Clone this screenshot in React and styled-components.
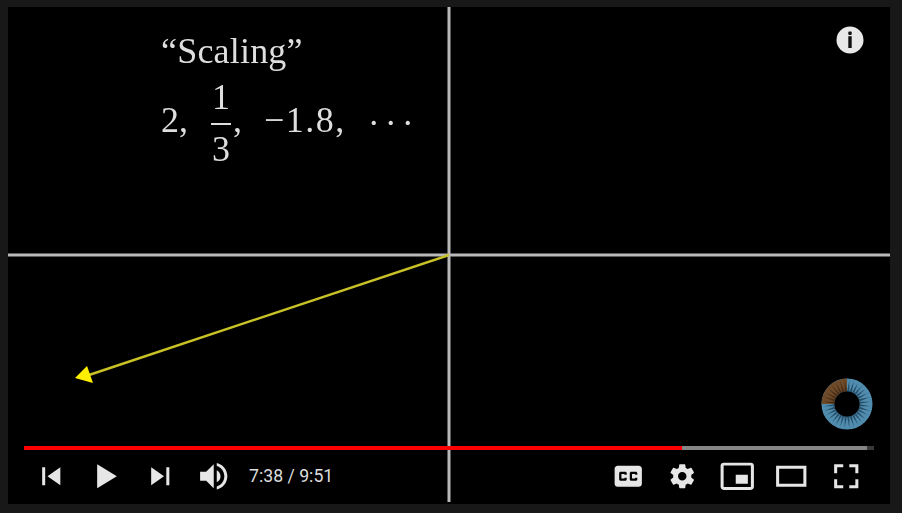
import React from 'react';
import styled, { createGlobalStyle } from 'styled-components';

const GlobalStyle = createGlobalStyle`
    html, body {
        margin: 0;
        padding: 0;
        height: 100%;
        background: #181818;
    }
`;

const Page = styled.div`
    width: 902px;
    height: 513px;
    padding: 7px 12px 9px 8px;
    box-sizing: border-box;
    background: #181818;
`;
const Player = styled.div`
    position: relative;
    width: 882px;
    height: 497px;
    background: #000;
    display: flex;
    flex-direction: column;
    justify-content: flex-end;
    overflow: hidden;
`;
const Scene = styled.svg`
    position: absolute;
    top: 0;
    left: 0;
`;
const MathText = styled.div`
    position: absolute;
    top: 22px;
    left: 153px;
    color: #dedede;
    font-family: "Liberation Serif", serif;
    filter: blur(0.35px);
`;
const Heading = styled.div`
    font-size: 36px;
    line-height: 44px;
    letter-spacing: 0.2px;
`;
const Formula = styled.div`
    display: flex;
    align-items: center;
    margin-top: 8px;
    font-size: 36px;
    height: 84px;
`;
const Term = styled.span`
    margin-left: ${p => p.$gap || 0}px;
    padding-bottom: 7px;
    letter-spacing: ${p => p.$spacing || 0}px;
    white-space: nowrap;
`;
const Fraction = styled.span`
    display: inline-flex;
    flex-direction: column;
    align-items: center;
    width: 20px;
    margin-left: 23px;
    font-size: 36px;
    line-height: 38px;
`;
const Numerator = styled.span`
    display: block;
    padding-bottom: 7px;
    border-bottom: 2px solid #dedede;
    width: 100%;
    text-align: center;
`;
const Denominator = styled.span`
    display: block;
    padding-top: 5px;
`;
const Dots = styled.span`
    margin-left: 22px;
    letter-spacing: 5px;
    font-size: 36px;
`;
const InfoIcon = styled.svg`
    position: absolute;
    top: 19px;
    right: 26px;
`;
const Ring = styled.svg`
    position: absolute;
    top: 371px;
    left: 812.5px;
`;
const Controls = styled.div`
    position: relative;
    padding: 0 17px 0 16px;
`;
const Progress = styled.div`
    display: flex;
    height: 4px;
    margin-right: -1px;
    background: #3a3a3a;
`;
const Played = styled.div`
    height: 100%;
    background: #f00;
`;
const Loaded = styled.div`
    height: 100%;
    background: #868686;
`;
const Bar = styled.div`
    display: flex;
    align-items: center;
    justify-content: space-between;
    box-sizing: border-box;
    height: 54px;
    padding-bottom: 2px;
`;
const Group = styled.div`
    display: flex;
    align-items: center;
`;
const Button = styled.svg`
    display: block;
    width: 54.5px;
    height: 54.5px;
    fill: #e6e6e6;
`;
const Time = styled.span`
    margin-left: 7px;
    color: #ddd;
    font-family: Roboto, "Liberation Sans", sans-serif;
    font-size: 17.7px;
`;

const paths = {
    prev: 'm 12,12 h 2 v 12 h -2 z m 3.5,6 8.5,6 V 12 z',
    play: 'M 12,26 18.5,22 18.5,14 12,10 z M 18.5,22 25,18 25,18 18.5,14 z',
    next: 'M 12,24 20.5,18 12,12 V 24 z M 22,12 v 12 h 2 V 12 h -2 z',
    volume: 'M8,21 L12,21 L17,26 L17,10 L12,15 L8,15 L8,21 Z M19,14 L19,22 C20.48,21.32 21.5,19.77 21.5,18 C21.5,16.26 20.48,14.74 19,14 ZM19,11.29 C21.89,12.15 24,14.83 24,18 C24,21.17 21.89,23.85 19,24.71 L19,26.77 C23.01,25.86 26,22.28 26,18 C26,13.72 23.01,10.14 19,9.23 L19,11.29 Z',
    cc: 'M11,11 C9.89,11 9,11.9 9,13 L9,23 C9,24.1 9.89,25 11,25 L25,25 C26.1,25 27,24.1 27,23 L27,13 C27,11.9 26.1,11 25,11 L11,11 Z M17,17 L15.5,17 L15.5,16.5 L13.5,16.5 L13.5,19.5 L15.5,19.5 L15.5,19 L17,19 L17,20 C17,20.55 16.55,21 16,21 L13,21 C12.45,21 12,20.55 12,20 L12,16 C12,15.45 12.45,15 13,15 L16,15 C16.55,15 17,15.45 17,16 L17,17 Z M24,17 L22.5,17 L22.5,16.5 L20.5,16.5 L20.5,19.5 L22.5,19.5 L22.5,19 L24,19 L24,20 C24,20.55 23.55,21 23,21 L20,21 C19.45,21 19,20.55 19,20 L19,16 C19,15.45 19.45,15 20,15 L23,15 C23.55,15 24,15.45 24,16 L24,17 Z',
    settings: 'm 23.94,18.78 c .03,-0.25 .05,-0.51 .05,-0.78 0,-0.27 -0.02,-0.52 -0.05,-0.78 l 1.68,-1.32 c .15,-0.12 .19,-0.33 .09,-0.51 l -1.6,-2.76 c -0.09,-0.17 -0.31,-0.24 -0.48,-0.17 l -1.99,.8 c -0.41,-0.32 -0.86,-0.58 -1.35,-0.78 l -0.30,-2.12 c -0.02,-0.19 -0.19,-0.33 -0.39,-0.33 l -3.2,0 c -0.2,0 -0.36,.14 -0.39,.33 l -0.30,2.12 c -0.48,.2 -0.93,.47 -1.35,.78 l -1.99,-0.8 c -0.18,-0.07 -0.39,0 -0.48,.17 l -1.6,2.76 c -0.10,.17 -0.05,.39 .09,.51 l 1.68,1.32 c -0.03,.25 -0.05,.52 -0.05,.78 0,.26 .02,.52 .05,.78 l -1.68,1.32 c -0.15,.12 -0.19,.33 -0.09,.51 l 1.6,2.76 c .09,.17 .31,.24 .48,.17 l 1.99,-0.8 c .41,.32 .86,.58 1.35,.78 l .30,2.12 c .02,.19 .19,.33 .39,.33 l 3.2,0 c .2,0 .36,-0.14 .39,-0.33 l .30,-2.12 c .48,-0.2 .93,-0.47 1.35,-0.78 l 1.99,.8 c .18,.07 .39,0 .48,-0.17 l 1.6,-2.76 c .09,-0.17 .05,-0.39 -0.09,-0.51 l -1.68,-1.32 0,0 z m -5.94,2.01 c -1.54,0 -2.8,-1.25 -2.8,-2.8 0,-1.54 1.25,-2.8 2.8,-2.8 1.54,0 2.8,1.25 2.8,2.8 0,1.54 -1.25,2.8 -2.8,2.8 l 0,0 z',
    miniplayer: 'M25,17 L17,17 L17,23 L25,23 L25,17 L25,17 Z M29,25 L29,10.98 C29,9.88 28.1,9 27,9 L9,9 C7.9,9 7,9.88 7,10.98 L7,25 C7,26.1 7.9,27 9,27 L27,27 C28.1,27 29,26.1 29,25 L29,25 Z M27,25.02 L9,25.02 L9,10.97 L27,10.97 L27,25.02 L27,25.02 Z',
    theater: 'm 28,11 0,14 -20,0 0,-14 z m -18,2 16,0 0,10 -16,0 0,-10 z',
    fullscreen: 'm 10,16 2,0 0,-4 4,0 0,-2 L 10,10 l 0,6 0,0 z m 10,-6 0,2 4,0 0,4 2,0 L 26,10 l -6,0 0,0 z m 4,14 -4,0 0,2 L 26,26 l 0,-6 -2,0 0,4 0,0 z M 12,20 10,20 10,26 l 6,0 0,-2 -4,0 0,-4 0,0 z',
};

const Icon = ({ name }) => (
    <Button viewBox="0 0 36 36">
        <path d={paths[name]} fillRule="evenodd" />
    </Button>
);

// loading ring, top left quarter is brown
const segments = Array.from({ length: 32 }, (_, i) => i);
const polar = (r, deg) => {
    const a = (deg - 90) * Math.PI / 180;
    return `${(26 + r * Math.cos(a)).toFixed(2)},${(26 + r * Math.sin(a)).toFixed(2)}`;
};

const LoadingRing = () => (
    <Ring width="52" height="52" viewBox="0 0 52 52">
        <circle cx="26" cy="26" r="19" fill="none" stroke="#4f8cae" strokeWidth="13" />
        <path d="M26,0.5 A25.5,25.5 0 0 0 0.5,26 L13,26 A13,13 0 0 1 26,13 Z" fill="#6d4a2a" />
        {segments.map(i => {
            const deg = i * 11.25 + 5.6;
            const brown = deg >= 270;
            return (
                <polygon
                    key={i}
                    points={`${polar(12.5, deg - 5)} ${polar(23.5, deg)} ${polar(12.5, deg + 5)}`}
                    fill={brown ? '#462c16' : '#264c66'}
                />
            );
        })}
        <circle cx="26" cy="26" r="12.5" fill="#000" />
    </Ring>
);

const App = () => (
    <>
        <GlobalStyle />
        <Page>
            <Player>
                <Scene width="882" height="497" viewBox="0 0 882 497">
                    <line x1="0" y1="248" x2="882" y2="248" stroke="#b9b9b9" strokeWidth="3" />
                    <line x1="441" y1="0" x2="441" y2="495" stroke="#b9b9b9" strokeWidth="3" />
                    <line x1="441" y1="248" x2="81" y2="368" stroke="#c9c227" strokeWidth="2.4" />
                    <polygon points="67,371 79,359 85,376" fill="#ffee00" />
                </Scene>
                <MathText>
                    <Heading>“Scaling”</Heading>
                    <Formula>
                        <Term>2,</Term>
                        <Fraction>
                            <Numerator>1</Numerator>
                            <Denominator>3</Denominator>
                        </Fraction>
                        <Term $gap={2}>,</Term>
                        <Term $gap={22} $spacing={1.5}>−1.8,</Term>
                        <Dots>···</Dots>
                    </Formula>
                </MathText>
                <InfoIcon width="28" height="28" viewBox="0 0 28 28">
                    <circle cx="14" cy="14" r="13.5" fill="#e8e8e8" />
                    <rect x="12.3" y="5.6" width="3.4" height="3.4" rx="1" fill="#111" />
                    <rect x="12.3" y="10.2" width="3.4" height="11.8" fill="#111" />
                </InfoIcon>
                <LoadingRing />
                <Controls>
                    <Progress>
                        <Played style={{ width: '77.4%' }} />
                        <Loaded style={{ width: '21.8%' }} />
                    </Progress>
                    <Bar>
                        <Group>
                            <Icon name="prev" />
                            <Icon name="play" />
                            <Icon name="next" />
                            <Icon name="volume" />
                            <Time>7:38 / 9:51</Time>
                        </Group>
                        <Group>
                            <Icon name="cc" />
                            <Icon name="settings" />
                            <Icon name="miniplayer" />
                            <Icon name="theater" />
                            <Icon name="fullscreen" />
                        </Group>
                    </Bar>
                </Controls>
            </Player>
        </Page>
    </>
);

export default App;
